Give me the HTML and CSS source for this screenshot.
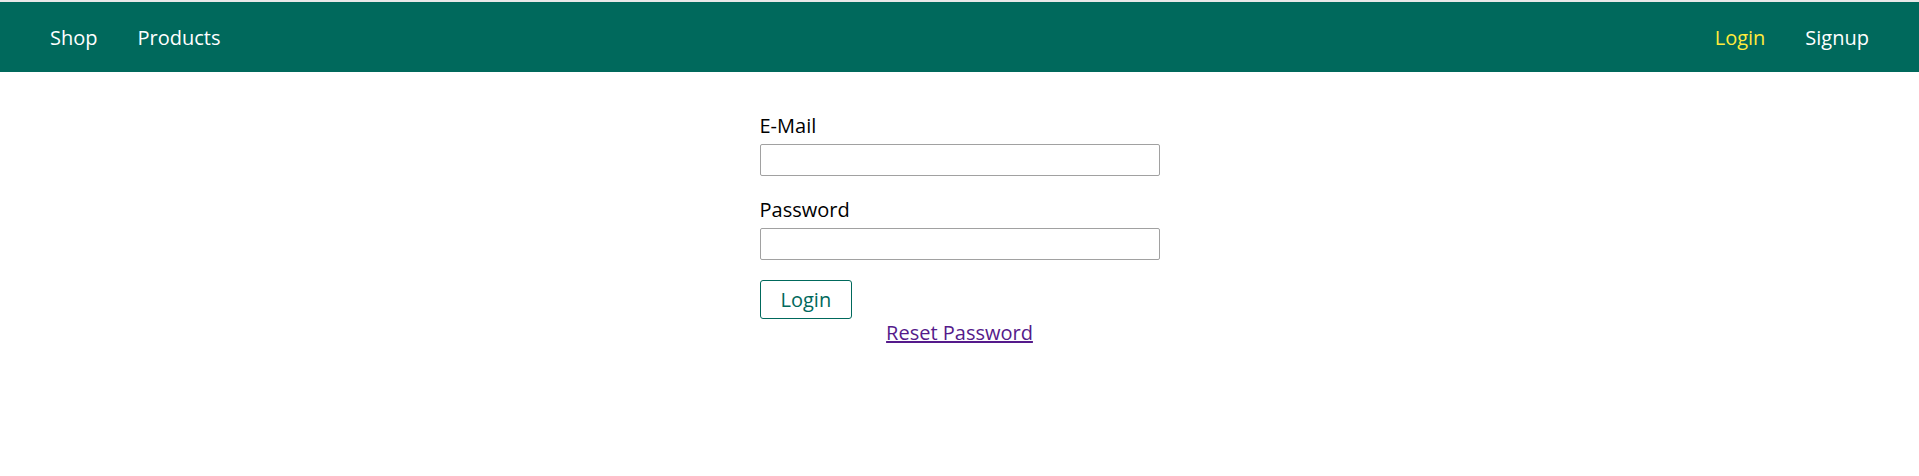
FILE: index.html
```html
<!DOCTYPE html>
<html lang="en">
<head>
<meta charset="UTF-8">
<title>Login</title>
<link rel="stylesheet" href="styles.css">
</head>
<body>
<header class="main-header">
  <nav class="main-header__nav">
    <ul class="main-header__item-list">
      <li class="main-header__item"><a href="#">Shop</a></li>
      <li class="main-header__item"><a href="#">Products</a></li>
    </ul>
    <ul class="main-header__item-list">
      <li class="main-header__item"><a class="active" href="#">Login</a></li>
      <li class="main-header__item"><a href="#">Signup</a></li>
    </ul>
  </nav>
</header>
<main class="main">
  <form class="login-form">
    <div class="form-control">
      <label for="email">E-Mail</label>
      <input type="email" id="email" name="email">
    </div>
    <div class="form-control">
      <label for="password">Password</label>
      <input type="password" id="password" name="password">
    </div>
    <button class="btn" type="submit">Login</button>
  </form>
  <div class="centered">
    <a class="reset-link" href="#">Reset Password</a>
  </div>
</main>
</body>
</html>
```

FILE: styles.css
```css
* {
  box-sizing: border-box;
}

html {
  font-size: 20px;
}

body {
  margin: 0;
  padding: 0;
  border-top: 2px solid #e8e8e8;
  font-family: "Open Sans", "Noto Sans", sans-serif;
  background: #ffffff;
  color: #000000;
}

.main-header {
  width: 100%;
  height: 3.5rem;
  background-color: #00695c;
  padding: 0 1.5rem;
  display: flex;
  align-items: center;
}

.main-header__nav {
  height: 100%;
  width: 100%;
  display: flex;
  align-items: center;
  justify-content: space-between;
}

.main-header__item-list {
  list-style: none;
  margin: 0;
  padding: 0;
  display: flex;
}

.main-header__item {
  margin: 0 1rem;
  padding: 0;
}

.main-header__item a {
  text-decoration: none;
  color: #ffffff;
}

.main-header__item a.active {
  color: #ffeb3b;
}

.main {
  padding: 1rem;
  margin: auto;
}

.login-form {
  width: 20rem;
  max-width: 90%;
  margin: auto;
}

.form-control {
  margin: 1rem 0;
}

.form-control label,
.form-control input {
  display: block;
  width: 100%;
  margin-bottom: 0.25rem;
}

.form-control input {
  border: 1px solid #a1a1a1;
  font-family: "Liberation Sans", Arial, sans-serif;
  font-size: 16px;
  line-height: 20px;
  height: 32px;
  padding: 5px 10px;
  border-radius: 2px;
  outline: none;
}

.btn {
  font: inherit;
  border: 1px solid #00695c;
  color: #00695c;
  background: #ffffff;
  border-radius: 3px;
  cursor: pointer;
  padding: 0.25rem 1rem;
}

.centered {
  text-align: center;
}

.reset-link {
  color: #551a8b;
}
```
